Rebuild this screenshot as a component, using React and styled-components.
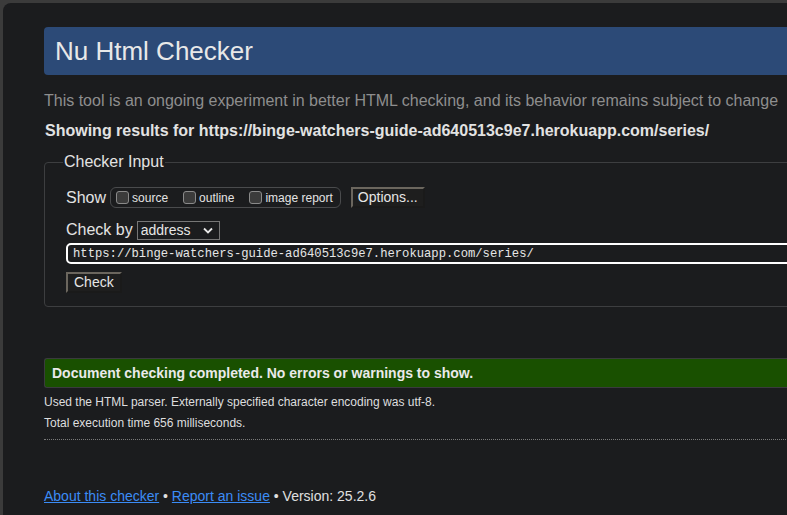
import React from "react";
import styled, { createGlobalStyle } from "styled-components";

const GlobalStyle = createGlobalStyle`
  html, body {
    margin: 0;
    height: 100%;
    overflow: hidden;
  }
  body {
    background: #3b3b3b;
    font-family: "Liberation Sans", Arial, sans-serif;
    color: #e3e3e3;
    padding: 3px 0 0 3px;
    box-sizing: border-box;
  }
  #root {
    height: 100%;
  }
`;

const Panel = styled.div`
  background: #1b1c1e;
  border-top-left-radius: 8px;
  height: 100%;
  padding: 24px 0 0 41px;
  box-sizing: border-box;
  overflow: hidden;
`;

const Content = styled.div`
  width: 800px;
`;

const Title = styled.h1`
  margin: 0;
  height: 48px;
  display: flex;
  align-items: center;
  padding-left: 11px;
  background: #2c4a77;
  border-radius: 4px 0 0 4px;
  font-size: 26px;
  font-weight: normal;
  color: #e8e8e8;
`;

const Intro = styled.p`
  margin: 16px 0 0;
  font-size: 16px;
  line-height: 20px;
  color: #8e8e8e;
  white-space: nowrap;
`;

const Results = styled.p`
  margin: 10px 0 0 1px;
  font-size: 16px;
  line-height: 20px;
  font-weight: bold;
  color: #e2e2e2;
  white-space: nowrap;
`;

const Fieldset = styled.fieldset`
  margin: 12px 0 0;
  padding: 10px 0 13px 21px;
  border: 1px solid #3d3e40;
  border-radius: 4px 0 0 4px;
  min-width: 0;
`;

const Legend = styled.legend`
  padding: 0 1px;
  margin-left: -3px;
  font-size: 16px;
  color: #e3e3e3;
`;

const Row = styled.div`
  display: flex;
  align-items: center;
  margin-top: ${(p) => p.$top || 0}px;
`;

const Label = styled.span`
  font-size: 16px;
  color: #e3e3e3;
  line-height: 20px;
`;

const ShowGroup = styled.div`
  display: flex;
  align-items: center;
  gap: 15px;
  height: 19px;
  margin-left: 4px;
  padding: 0 7px 0 5px;
  border: 1px solid #4a4b4d;
  border-radius: 6px;
`;

const Option = styled.label`
  display: flex;
  align-items: center;
  gap: 3px;
  font-size: 12px;
  color: #e3e3e3;
`;

const Box = styled.span`
  width: 11px;
  height: 11px;
  border: 1px solid #8a8a8a;
  border-radius: 3px;
  background: #3b3b3b;
`;

const OutsetButton = styled.button`
  font-family: "Liberation Sans", Arial, sans-serif;
  font-size: 14px;
  color: #e6e6e6;
  background: #1e1e1e;
  border: 2px solid;
  border-color: #6b665e #1a1a1a #1a1a1a #6b665e;
  padding: 0 ${(p) => p.$pad || 6}px 1px;
  height: 21px;
  margin-left: ${(p) => p.$left || 0}px;
  cursor: pointer;
`;

const SelectWrap = styled.div`
  position: relative;
  margin-left: 4px;
`;

const Select = styled.select`
  appearance: none;
  width: 83px;
  height: 19px;
  padding: 0 0 0 3px;
  font-family: "Liberation Sans", Arial, sans-serif;
  font-size: 14px;
  color: #e6e6e6;
  background: #1b1c1e;
  border: 1px solid #767676;
  border-radius: 0;
`;

const Chevron = styled.svg`
  position: absolute;
  right: 7px;
  top: 6px;
  pointer-events: none;
`;

const UrlInput = styled.input`
  display: block;
  margin: 3px 0 0 0;
  width: 760px;
  height: 21px;
  box-sizing: border-box;
  padding: 0 0 0 5px;
  font-family: "Liberation Mono", "DejaVu Sans Mono", monospace;
  font-size: 12.2px;
  color: #e6e6e6;
  background: #1b1c1e;
  border: 2px solid #ffffff;
  border-radius: 5px 0 0 5px;
  outline: none;
`;

const Success = styled.div`
  margin-top: 51px;
  height: 28px;
  display: flex;
  align-items: center;
  padding-left: 7px;
  background: #195000;
  border: 1px solid #3a3b3d;
  border-right: none;
  border-radius: 3px 0 0 3px;
  font-size: 14px;
  font-weight: bold;
  color: #eaeaea;
`;

const Note = styled.p`
  margin: ${(p) => p.$top || 0}px 0 0;
  font-size: 12px;
  line-height: 15px;
  color: #dedede;
`;

const Divider = styled.hr`
  margin: 8px 0 0;
  border: none;
  border-top: 1px dotted #7a7a7a;
`;

const Footer = styled.p`
  margin: 47px 0 0;
  font-size: 14px;
  line-height: 18px;
  color: #e0e0e0;
`;

const Link = styled.a`
  color: #3b8cf6;
  text-decoration: underline;
`;

export default function App() {
  const url = "https://binge-watchers-guide-ad640513c9e7.herokuapp.com/series/";
  return (
    <>
      <GlobalStyle />
      <Panel>
        <Content>
          <Title>Nu Html Checker</Title>
          <Intro>
            This tool is an ongoing experiment in better HTML checking, and its
            behavior remains subject to change
          </Intro>
          <Results>Showing results for {url}</Results>
          <Fieldset>
            <Legend>Checker Input</Legend>
            <Row $top={6}>
              <Label>Show</Label>
              <ShowGroup>
                <Option>
                  <Box />
                  source
                </Option>
                <Option>
                  <Box />
                  outline
                </Option>
                <Option>
                  <Box />
                  image report
                </Option>
              </ShowGroup>
              <OutsetButton $left={10} $pad={5}>Options...</OutsetButton>
            </Row>
            <Row $top={12}>
              <Label>Check by</Label>
              <SelectWrap>
                <Select defaultValue="address">
                  <option value="address">address</option>
                  <option value="file">file upload</option>
                  <option value="text">text input</option>
                </Select>
                <Chevron width="10" height="7" viewBox="0 0 10 7">
                  <path
                    d="M1 1.5 L5 5.5 L9 1.5"
                    fill="none"
                    stroke="#e6e6e6"
                    strokeWidth="1.8"
                  />
                </Chevron>
              </SelectWrap>
            </Row>
            <UrlInput defaultValue={url} readOnly />
            <Row $top={8}>
              <OutsetButton $pad={6}>Check</OutsetButton>
            </Row>
          </Fieldset>
          <Success>Document checking completed. No errors or warnings to show.</Success>
          <Note $top={7}>
            Used the HTML parser. Externally specified character encoding was
            utf-8.
          </Note>
          <Note $top={6}>Total execution time 656 milliseconds.</Note>
          <Divider />
          <Footer>
            <Link href="#">About this checker</Link> •{" "}
            <Link href="#">Report an issue</Link> • Version: 25.2.6
          </Footer>
        </Content>
      </Panel>
    </>
  );
}
